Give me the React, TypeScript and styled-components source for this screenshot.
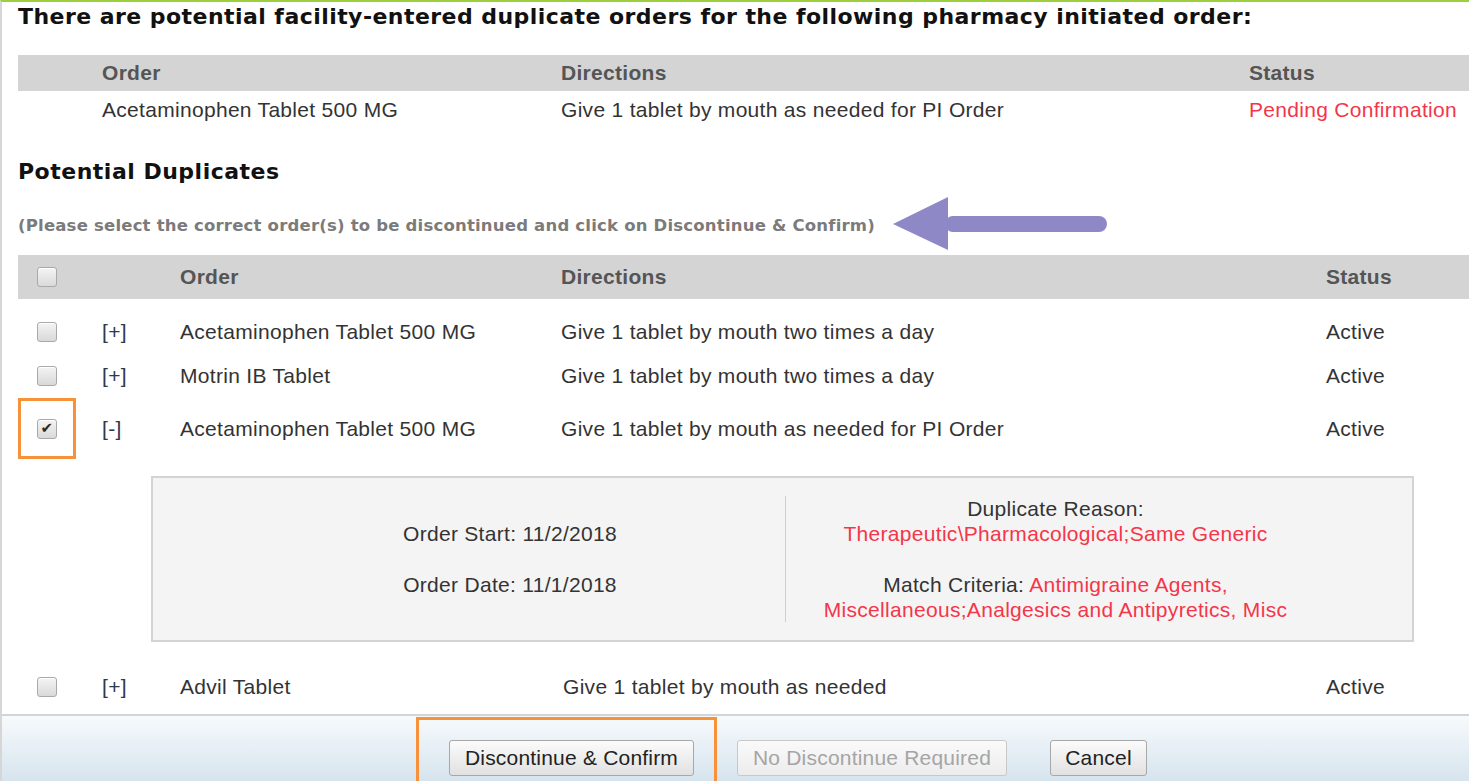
import styled, { createGlobalStyle } from "styled-components";

const GlobalStyle = createGlobalStyle`
  html, body {
    margin: 0;
    padding: 0;
    background: #ffffff;
    overflow: hidden;
  }
`;

const Page = styled.div`
  width: 1469px;
  height: 781px;
  box-sizing: border-box;
  border-top: 2px solid #9ccf3c;
  border-left: 2px solid #d6d6d6;
  display: flex;
  flex-direction: column;
  font-family: "Liberation Sans", Arial, sans-serif;
  color: #333;
`;

const Content = styled.div`
  flex: 1;
  padding-left: 16px;
  overflow: hidden;
`;

const Title = styled.h1`
  margin: 0;
  height: 30px;
  line-height: 30px;
  font-family: "DejaVu Sans", Verdana, sans-serif;
  font-size: 22px;
  letter-spacing: 0.45px;
  font-weight: bold;
  color: #111;
  white-space: nowrap;
`;

const Heading = styled.h2`
  margin: 0;
  height: 32px;
  line-height: 32px;
  font-family: "DejaVu Sans", Verdana, sans-serif;
  font-size: 22px;
  letter-spacing: 0.5px;
  font-weight: bold;
  color: #111;
`;

const Hint = styled.div`
  display: flex;
  align-items: center;
  gap: 16px;
  height: 40px;
  font-family: "DejaVu Sans", Verdana, sans-serif;
  font-size: 16.5px;
  letter-spacing: 0.2px;
  font-weight: bold;
  color: #7b7b7b;
  white-space: nowrap;
`;

const Spacer = styled.div<{ $h: number }>`
  height: ${(p) => p.$h}px;
`;

const Row = styled.div<{ $cols: string; $h: number; $head?: boolean; $indent?: boolean }>`
  display: grid;
  grid-template-columns: ${(p) => p.$cols};
  align-items: center;
  height: ${(p) => p.$h}px;
  padding-left: ${(p) => (p.$indent ? 19 : 0)}px;
  background: ${(p) => (p.$head ? "#d4d4d4" : "transparent")};
  font-size: 21px;
  letter-spacing: 0.3px;
  font-weight: ${(p) => (p.$head ? "bold" : "normal")};
  color: ${(p) => (p.$head ? "#555" : "#333")};
  white-space: nowrap;
`;

const Cell = styled.div<{ $red?: boolean }>`
  color: ${(p) => (p.$red ? "#f4364a" : "inherit")};
  display: flex;
  align-items: center;
`;

const Toggle = styled.span`
  color: #2c3a4c;
`;

const Box = styled.span`
  display: inline-flex;
  align-items: center;
  justify-content: center;
  width: 18px;
  height: 18px;
  border: 1px solid #a9a9a9;
  border-radius: 3px;
  background: linear-gradient(#f4f4f4, #d9d9d9);
  box-shadow: inset 0 1px 0 #fff;
  font-family: "DejaVu Sans", sans-serif;
  font-size: 15px;
  line-height: 1;
  color: #2a2a2a;
`;

const Highlight = styled.div`
  box-sizing: border-box;
  width: 58px;
  height: 61px;
  margin-left: -19px;
  border: 3px solid #f7923a;
  display: flex;
  align-items: center;
  justify-content: center;
`;

const Detail = styled.div`
  box-sizing: border-box;
  margin: 18px 0 0 133px;
  width: 1263px;
  height: 166px;
  background: #f4f4f4;
  border: 2px solid #d3d3d3;
  display: grid;
  grid-template-columns: 632px 1fr;
  align-items: center;
  font-size: 21px;
  letter-spacing: 0.3px;
  color: #333;
  white-space: nowrap;
`;

const DetailCol = styled.div<{ $pl: number; $pr: number; $sep?: boolean }>`
  text-align: center;
  padding-left: ${(p) => p.$pl}px;
  padding-right: ${(p) => p.$pr}px;
  line-height: 25.3px;
  border-left: ${(p) => (p.$sep ? "1px solid #cfcfcf" : "none")};
  display: flex;
  flex-direction: column;
  gap: ${(p) => (p.$sep ? 25 : 26)}px;
`;

const Red = styled.span`
  color: #f4364a;
`;

const Footer = styled.div`
  height: 67px;
  box-sizing: border-box;
  border-top: 2px solid #d4d4d4;
  background: linear-gradient(#f7fafc, #d6e4ee);
  display: flex;
  align-items: flex-end;
  padding-left: 414px;
  gap: 20px;
`;

const Framed = styled.div`
  border: 3px solid #f7923a;
  border-bottom: none;
  padding: 20px 20px 0 30px;
`;

const Button = styled.button<{ $w: number }>`
  width: ${(p) => p.$w}px;
  height: 36px;
  border: 1px solid #a8a8a8;
  border-radius: 3px;
  background: linear-gradient(#fbfbfb, #e1e1e1);
  font-family: "Liberation Sans", Arial, sans-serif;
  font-size: 21px;
  letter-spacing: 0.2px;
  color: #222;
  padding: 0;
  margin-bottom: 5px;
  &:disabled {
    color: #a5a5a5;
    border-color: #c8c8c8;
    background: linear-gradient(#fafafa, #ececec);
  }
  & + & {
    margin-left: 23px;
  }
`;

const Arrow = () => (
  <svg width="222" height="56" viewBox="0 0 222 56">
    <line x1="62" y1="27" x2="208" y2="27" stroke="#8e89c6" strokeWidth="16" strokeLinecap="round" />
    <polygon points="2,27 57,0 57,53" fill="#8e89c6" />
  </svg>
);

const Check = ({ checked }: { checked?: boolean }) => <Box>{checked ? "✔" : ""}</Box>;

const topCols = "84px 459px 688px 1fr";
const dupCols = "65px 78px 381px 765px 1fr";

const dupRows = [
  { name: "Acetaminophen Tablet 500 MG", dir: "Give 1 tablet by mouth two times a day" },
  { name: "Motrin IB Tablet", dir: "Give 1 tablet by mouth two times a day" },
];

export default function App() {
  return (
    <>
      <GlobalStyle />
      <Page>
        <Content>
          <Title>There are potential facility-entered duplicate orders for the following pharmacy initiated order:</Title>
          <Spacer $h={23} />
          <Row $cols={topCols} $h={36} $head>
            <Cell />
            <Cell>Order</Cell>
            <Cell>Directions</Cell>
            <Cell>Status</Cell>
          </Row>
          <Row $cols={topCols} $h={37}>
            <Cell />
            <Cell>Acetaminophen Tablet 500 MG</Cell>
            <Cell>Give 1 tablet by mouth as needed for PI Order</Cell>
            <Cell $red>Pending Confirmation</Cell>
          </Row>
          <Spacer $h={28} />
          <Heading>Potential Duplicates</Heading>
          <Spacer $h={17} />
          <Hint>
            <span>(Please select the correct order(s) to be discontinued and click on Discontinue &amp; Confirm)</span>
            <Arrow />
          </Hint>
          <Spacer $h={10} />
          <Row $cols={dupCols} $h={44} $head $indent>
            <Cell><Check /></Cell>
            <Cell />
            <Cell>Order</Cell>
            <Cell>Directions</Cell>
            <Cell>Status</Cell>
          </Row>
          <Spacer $h={11} />
          {dupRows.map((r, i) => (
            <Row key={i} $cols={dupCols} $h={44} $indent>
              <Cell><Check /></Cell>
              <Cell><Toggle>[+]</Toggle></Cell>
              <Cell>{r.name}</Cell>
              <Cell>{r.dir}</Cell>
              <Cell>Active</Cell>
            </Row>
          ))}
          <Row $cols={dupCols} $h={60} $indent>
            <Cell>
              <Highlight><Check checked /></Highlight>
            </Cell>
            <Cell><Toggle>[-]</Toggle></Cell>
            <Cell>Acetaminophen Tablet 500 MG</Cell>
            <Cell>Give 1 tablet by mouth as needed for PI Order</Cell>
            <Cell>Active</Cell>
          </Row>
          <Detail>
            <DetailCol $pl={82} $pr={0}>
              <span>Order Start: 11/2/2018</span>
              <span>Order Date: 11/1/2018</span>
            </DetailCol>
            <DetailCol $pl={0} $pr={87} $sep>
              <div>
                Duplicate Reason:
                <br />
                <Red>Therapeutic\Pharmacological;Same Generic</Red>
              </div>
              <div>
                Match Criteria: <Red>Antimigraine Agents,</Red>
                <br />
                <Red>Miscellaneous;Analgesics and Antipyretics, Misc</Red>
              </div>
            </DetailCol>
          </Detail>
          <Spacer $h={22} />
          <Row $cols="65px 78px 383px 763px 1fr" $h={46} $indent>
            <Cell><Check /></Cell>
            <Cell><Toggle>[+]</Toggle></Cell>
            <Cell>Advil Tablet</Cell>
            <Cell>Give 1 tablet by mouth as needed</Cell>
            <Cell>Active</Cell>
          </Row>
        </Content>
        <Footer>
          <Framed>
            <Button $w={245}>Discontinue &amp; Confirm</Button>
          </Framed>
          <Button $w={270} disabled>No Discontinue Required</Button>
          <Button $w={97}>Cancel</Button>
        </Footer>
      </Page>
    </>
  );
}
